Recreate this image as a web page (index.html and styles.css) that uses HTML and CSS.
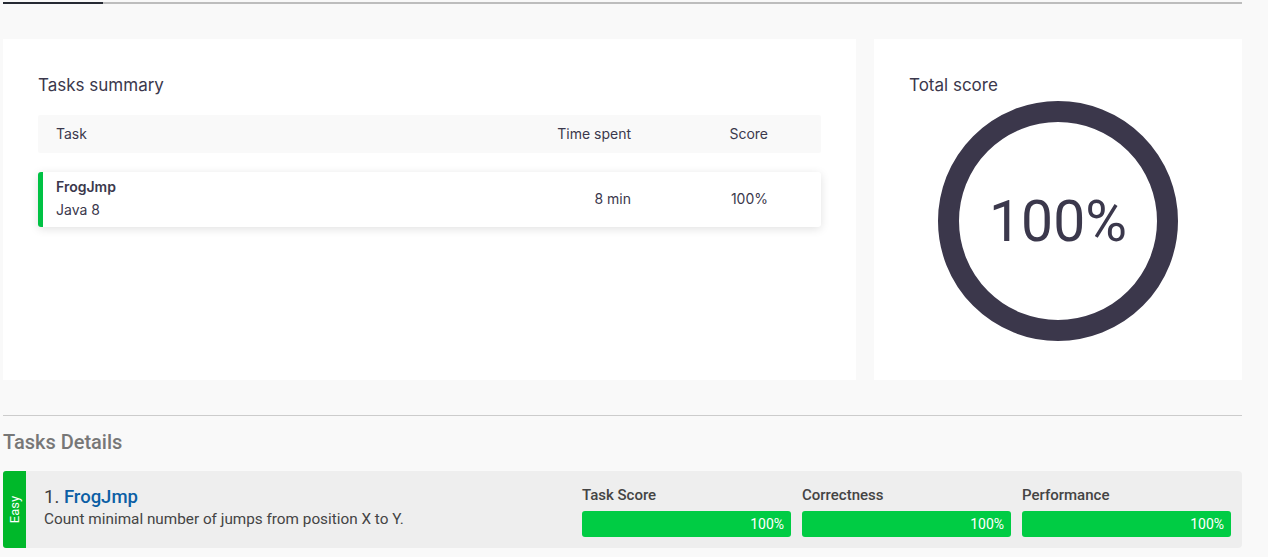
FILE: index.html
```html
<!DOCTYPE html>
<html>
<head>
<meta charset="utf-8">
<link rel="stylesheet" href="styles.css">
</head>
<body>
<div class="page">
  <div class="tabs">
    <div class="tab active"></div>
    <div class="tab rest"></div>
  </div>

  <div class="cards">
    <section class="card summary">
      <h2 class="card-title">Tasks summary</h2>
      <div class="table">
        <div class="thead">
          <div class="c-task">Task</div>
          <div class="c-time">Time spent</div>
          <div class="c-score">Score</div>
        </div>
        <div class="trow">
          <div class="c-task">
            <div class="task-name">FrogJmp</div>
            <div class="task-lang">Java 8</div>
          </div>
          <div class="c-time">8 min</div>
          <div class="c-score">100%</div>
        </div>
      </div>
    </section>

    <section class="card total">
      <h2 class="card-title">Total score</h2>
      <div class="ring-wrap">
        <div class="ring"><span class="ring-value">100%</span></div>
      </div>
    </section>
  </div>

  <hr class="divider">

  <h3 class="details-title">Tasks Details</h3>

  <div class="detail">
    <div class="badge"><span>Easy</span></div>
    <div class="detail-info">
      <div class="detail-name">1. <a class="detail-link">FrogJmp</a></div>
      <div class="detail-desc">Count minimal number of jumps from position X to Y.</div>
    </div>
    <div class="metrics">
      <div class="metric">
        <div class="metric-label">Task Score</div>
        <div class="bar">100%</div>
      </div>
      <div class="metric">
        <div class="metric-label">Correctness</div>
        <div class="bar">100%</div>
      </div>
      <div class="metric">
        <div class="metric-label">Performance</div>
        <div class="bar">100%</div>
      </div>
    </div>
  </div>
</div>
</body>
</html>
```

FILE: styles.css
```css
* { box-sizing: border-box; }

html, body {
  margin: 0;
  padding: 0;
  background: #f9f9f9;
}

body {
  font-family: Inter, Roboto, "Liberation Sans", sans-serif;
  color: #3b384c;
}

.page {
  width: 1239px;
  margin-left: 3px;
  padding-top: 2px;
}

.tabs {
  display: flex;
  height: 2px;
}
.tab.active {
  width: 100px;
  background: #262a33;
}
.tab.rest {
  flex: 1;
  background: #bdbdbd;
}

.cards {
  display: flex;
  gap: 18px;
  margin-top: 35px;
}

.card {
  background: #fff;
  height: 341px;
  padding: 32px 35px 0 35px;
}
.summary { width: 853px; }
.total { flex: 1; }

.card-title {
  margin: 0;
  font-size: 17px;
  font-weight: 400;
  line-height: 28px;
  color: #3b384c;
}

.table { margin-top: 16px; }

.thead, .trow {
  display: grid;
  grid-template-columns: 1fr 120px 137px;
  align-items: center;
  padding-right: 53px;
  font-size: 14px;
}
.thead {
  height: 38px;
  background: #f9f9f9;
  padding-left: 18px;
  padding-bottom: 2px;
  border-radius: 2px;
}
.trow {
  height: 55px;
  margin-top: 19px;
  background: #fff;
  border-left: 5px solid #00c244;
  border-radius: 3px;
  padding-left: 13px;
  padding-bottom: 2px;
  box-shadow: 0 2px 10px rgba(0, 0, 0, 0.12);
}
.trow .c-task { padding-bottom: 2px; }
.c-time, .c-score { text-align: right; }

.task-name {
  font-weight: 600;
  line-height: 21px;
}
.task-lang {
  line-height: 21px;
  margin-top: 2px;
}

.ring-wrap {
  display: flex;
  justify-content: center;
  margin-top: 2px;
}
.ring {
  width: 240px;
  height: 240px;
  border: 21px solid #3b374b;
  border-radius: 50%;
  display: flex;
  align-items: center;
  justify-content: center;
}
.ring-value {
  font-family: Roboto, sans-serif;
  font-size: 57px;
  font-weight: 400;
  color: #3b384c;
  line-height: 1;
}

.divider {
  margin: 35px 0 0 0;
  border: 0;
  border-top: 1px solid #cccccc;
}

.details-title {
  margin: 14px 0 0 0;
  font-family: Roboto, sans-serif;
  font-size: 20px;
  font-weight: 500;
  line-height: 24px;
  color: #777777;
}

.detail {
  display: flex;
  height: 77px;
  margin-top: 17px;
  background: #eeeeee;
  border-radius: 4px;
  font-family: Roboto, sans-serif;
}

.badge {
  width: 23px;
  background: #00b82a;
  border-radius: 3px 0 0 3px;
  display: flex;
  align-items: center;
  justify-content: center;
}
.badge span {
  transform: rotate(-90deg);
  color: #fff;
  font-size: 13px;
  white-space: nowrap;
}

.detail-info {
  flex: 1;
  padding: 15px 0 0 18px;
}
.detail-name {
  font-size: 18.5px;
  line-height: 22px;
  color: #3c3c3c;
}
.detail-link {
  color: #0b5fa5;
  font-weight: 500;
}
.detail-desc {
  font-size: 15.3px;
  line-height: 20px;
  margin-top: 1px;
  color: #444;
}

.metrics {
  display: flex;
  gap: 11px;
  padding: 15px 11px 0 0;
}
.metric { width: 209px; }
.metric-label {
  font-size: 15px;
  font-weight: 500;
  color: #444;
  line-height: 18px;
}
.bar {
  margin-top: 7px;
  height: 26px;
  background: #00cc44;
  border-radius: 3px;
  color: #fff;
  font-size: 14px;
  line-height: 26px;
  text-align: right;
  padding-right: 7px;
}
```
